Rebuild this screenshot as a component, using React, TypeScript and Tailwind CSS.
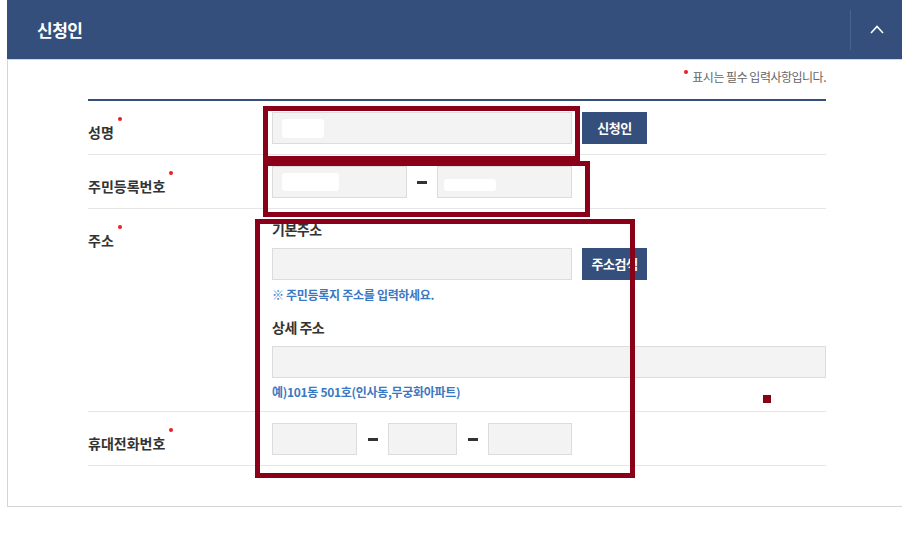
import React from "react";

const ff = "font-['Noto_Sans_CJK_KR','Noto_Sans',sans-serif]";

function Req() {
  return <span className="absolute -right-[8px] -top-[5px] h-[4px] w-[4px] rounded-full bg-[#ee1c25]" />;
}

function Label({ text }: { text: string }) {
  return (
    <div className="w-[184px] shrink-0 pt-[18px]">
      <span className="relative inline-block text-[14px] leading-[20px] font-bold text-[#333]">
        {text}
        <Req />
      </span>
    </div>
  );
}

function Field({ w, children }: { w: string; children?: React.ReactNode }) {
  return (
    <div className={`relative h-[32px] shrink-0 border border-[#dcdcdc] bg-[#f3f3f3] ${w}`}>{children}</div>
  );
}

function Dash() {
  return <div className="mx-auto h-[3px] w-[10px] bg-[#333]" />;
}

function NavyButton({ text }: { text: string }) {
  return (
    <button className="ml-[10px] h-[32px] w-[65px] bg-[#354f7c] text-[13px] font-bold tracking-[-0.5px] text-white">
      {text}
    </button>
  );
}

// white privacy blobs over the masked values
function Blob({ cls }: { cls: string }) {
  return <span className={`absolute rounded-[3px] bg-white ${cls}`} />;
}

export default function App() {
  return (
    <div className={`relative h-[545px] w-[902px] overflow-hidden bg-white ${ff}`}>
      <div className="ml-[7px]">
        {/* header */}
        <div className="flex h-[59px] items-center bg-[#354f7c]">
          <h2 className="flex-1 pl-[30px] text-[17px] font-bold tracking-[-0.5px] text-white">신청인</h2>
          <div className="h-[40px] w-px bg-[#4b6390]" />
          <div className="flex w-[51px] items-center justify-center">
            <svg width="14" height="9" viewBox="0 0 14 9" fill="none">
              <polyline points="1,8 7,1.5 13,8" stroke="white" strokeWidth="1.6" />
            </svg>
          </div>
        </div>

        {/* body */}
        <div className="border-t border-b border-l border-t-[#d3d9e3] border-b-[#d5d5d5] border-l-[#d5d5d5] pr-[76px] pl-[80px]">
          <div className="flex h-[39px] items-start justify-end pt-[9px]">
            <span className="relative text-[12px] leading-[16px] tracking-[-0.5px] text-[#666]">
              <span className="absolute -left-[8px] top-[1px] h-[4px] w-[4px] rounded-full bg-[#ee1c25]" />
              표시는 필수 입력사항입니다.
            </span>
          </div>
          <div className="h-[2px] bg-[#354f7c]" />

          {/* 성명 */}
          <div className="flex border-b border-[#e6e6e6]">
            <Label text="성명" />
            <div className="flex pt-[11px] pb-[10px]">
              <Field w="w-[300px]">
                <Blob cls="left-[9px] top-[6px] h-[19px] w-[42px]" />
              </Field>
              <NavyButton text="신청인" />
            </div>
          </div>

          {/* 주민등록번호 */}
          <div className="flex border-b border-[#e6e6e6]">
            <Label text="주민등록번호" />
            <div className="flex items-center pt-[11px] pb-[10px]">
              <Field w="w-[135px]">
                <Blob cls="left-[9px] top-[6px] h-[18px] w-[57px]" />
              </Field>
              <div className="w-[30px]">
                <Dash />
              </div>
              <Field w="w-[135px]">
                <Blob cls="left-[6px] top-[12px] h-[12px] w-[52px]" />
              </Field>
            </div>
          </div>

          {/* 주소 */}
          <div className="flex border-b border-[#e6e6e6]">
            <Label text="주소" />
            <div className="flex-1 pt-[10px] pb-[11px]">
              <div className="text-[14px] leading-[20px] font-bold tracking-[-0.5px] text-[#333]">기본주소</div>
              <div className="mt-[9px] flex">
                <Field w="w-[300px]" />
                <NavyButton text="주소검색" />
              </div>
              <p className="mt-[7px] text-[12px] leading-[16px] font-bold tracking-[-0.3px] text-[#3b78c2]">
                ※ 주민등록지 주소를 입력하세요.
              </p>
              <div className="mt-[14px] text-[14px] leading-[20px] font-bold tracking-[-0.5px] text-[#333]">상세 주소</div>
              <div className="mt-[9px]">
                <Field w="w-full" />
              </div>
              <p className="mt-[6px] text-[12px] leading-[16px] font-bold tracking-[-0.3px] text-[#3b78c2]">
                예)101동 501호(인사동,무궁화아파트)
              </p>
            </div>
          </div>

          {/* 휴대전화번호 */}
          <div className="flex border-b border-[#e6e6e6]">
            <Label text="휴대전화번호" />
            <div className="flex items-center pt-[11px] pb-[10px]">
              <Field w="w-[85px]" />
              <div className="w-[31px]">
                <Dash />
              </div>
              <Field w="w-[69px]" />
              <div className="w-[31px]">
                <Dash />
              </div>
              <Field w="w-[84px]" />
            </div>
          </div>

          <div className="h-[40px]" />
        </div>
      </div>

      {/* red annotation marks over the screenshot */}
      <div className="absolute top-[106px] left-[263px] h-[55px] w-[317px] border-[5px] border-[#8a0019]" />
      <div className="absolute top-[161px] left-[263px] h-[56px] w-[327px] border-[5px] border-[#8a0019]" />
      <div className="absolute top-[219px] left-[255px] h-[259px] w-[380px] border-[5px] border-[#8a0019]" />
      <div className="absolute top-[395px] left-[763px] h-[8px] w-[8px] bg-[#8a0019]" />
    </div>
  );
}
